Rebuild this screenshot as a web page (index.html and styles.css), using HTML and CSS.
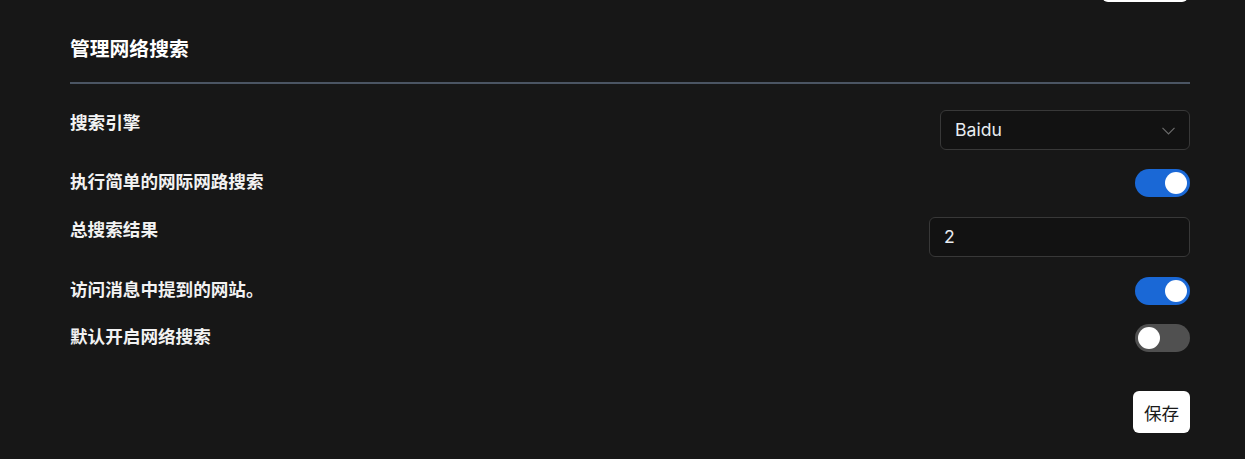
FILE: index.html
```html
<!DOCTYPE html>
<html lang="zh-CN">
<head>
<meta charset="utf-8">
<title>管理网络搜索</title>
<link rel="stylesheet" href="styles.css">
</head>
<body>
<div class="page">
  <div class="topbar"><button class="btn-top" type="button" aria-label="保存"></button></div>
  <h2 class="section-title">管理网络搜索</h2>
  <div class="rows">
    <div class="row">
      <span class="label">搜索引擎</span>
      <div class="select">
        <span class="select-value">Baidu</span>
        <svg class="chev" width="13" height="8" viewBox="0 0 13 8"><path d="M0.5 0.8 L6.5 7 L12.5 0.8" fill="none" stroke="#6b6b6b" stroke-width="1.2"/></svg>
      </div>
    </div>
    <div class="row">
      <span class="label">执行简单的网际网路搜索</span>
      <span class="toggle on"><span class="knob"></span></span>
    </div>
    <div class="row">
      <span class="label">总搜索结果</span>
      <div class="input">2</div>
    </div>
    <div class="row">
      <span class="label">访问消息中提到的网站。</span>
      <span class="toggle on"><span class="knob"></span></span>
    </div>
    <div class="row">
      <span class="label">默认开启网络搜索</span>
      <span class="toggle"><span class="knob"></span></span>
    </div>
  </div>
  <div class="actions"><button class="btn-save" type="button">保存</button></div>
</div>
</body>
</html>
```
FILE: styles.css
```css
* { box-sizing: border-box; }
html, body { margin: 0; padding: 0; }
body {
  background: #171717;
  color: #f2f2f2;
  font-family: "Inter", "Noto Sans CJK SC", sans-serif;
  font-size: 17.6px;
  height: 459px;
  overflow: hidden;
}
.page {
  padding: 0 55px 0 70px;
}
.topbar {
  height: 2px;
  display: flex;
  justify-content: flex-end;
  overflow: visible;
}
.btn-top {
  margin-top: -40px;
  height: 42px;
  width: 86px;
  margin-right: 2px;
  background: #ffffff;
  border: none;
  border-radius: 6px;
}
.section-title {
  margin: 32px 0 0 0;
  font-family: "Noto Sans CJK SC", sans-serif;
  font-size: 19.8px;
  line-height: 28px;
  font-weight: 700;
  color: #ffffff;
  padding-bottom: 20px;
  border-bottom: 2px solid #4b5563;
}
.rows {
  margin-top: 26px;
  display: flex;
  flex-direction: column;
  gap: 19.8px;
}
.row {
  display: flex;
  justify-content: space-between;
  align-items: flex-start;
}
.label {
  font-family: "Noto Sans CJK SC", sans-serif;
  font-weight: 700;
  font-size: 17.6px;
  line-height: 1.4;
  color: #f2f2f2;
}
.select {
  width: 250px;
  height: 39.6px;
  border: 1px solid #383838;
  border-radius: 6px;
  background: #121212;
  display: flex;
  align-items: center;
  justify-content: space-between;
  padding: 0 14px 0 14px;
}
.select-value {
  font-size: 17.6px;
  color: #e8ecf1;
}
.chev { display: block; margin-top: 2px; }
.input {
  width: 261px;
  height: 39.6px;
  border: 1px solid #383838;
  border-radius: 6px;
  background: #121212;
  display: flex;
  align-items: center;
  padding: 0 14px;
  font-size: 17.6px;
  color: #e8ecf1;
}
.toggle {
  width: 55px;
  height: 28px;
  border-radius: 14px;
  background: #505050;
  display: flex;
  align-items: center;
  padding: 0 3px;
}
.toggle.on {
  background: #1a68d6;
  justify-content: flex-end;
}
.knob {
  width: 22px;
  height: 22px;
  border-radius: 50%;
  background: #ffffff;
}
.actions {
  margin-top: 39px;
  display: flex;
  justify-content: flex-end;
}
.btn-save {
  width: 57px;
  height: 42px;
  background: #ffffff;
  color: #1a1a1a;
  border: none;
  border-radius: 6px;
  font-family: "Noto Sans CJK SC", sans-serif;
  font-size: 17.6px;
  padding: 0;
}
```
